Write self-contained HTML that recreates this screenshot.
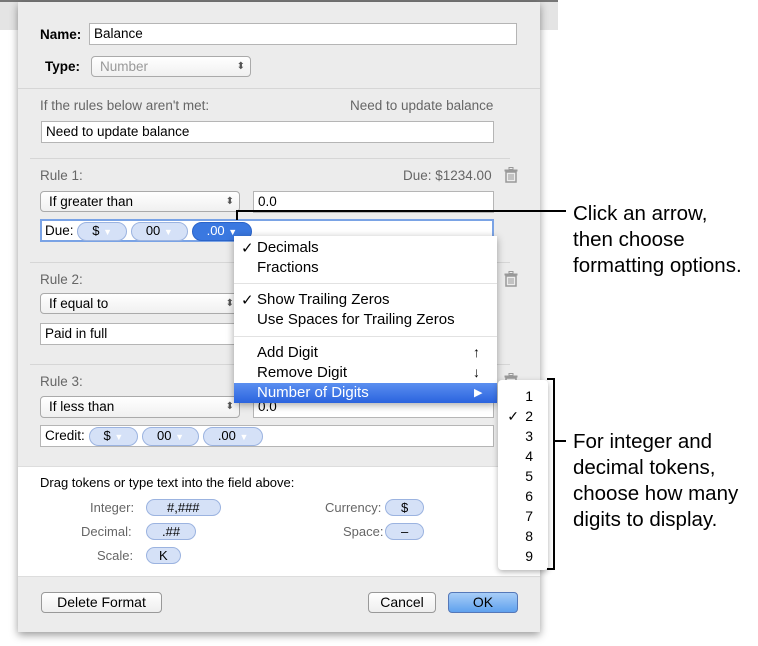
<!DOCTYPE html>
<html><head><style>
body{margin:0;width:758px;height:646px;background:#fff;position:relative;overflow:hidden;font-family:"Liberation Sans",sans-serif;font-size:13.5px;color:#000}
.a{position:absolute}
.f{position:absolute;background:#fff;border:1px solid #b5b5b5;box-sizing:border-box;padding:2px 4px;font-size:13.5px;line-height:16px}
.p{position:absolute;background:linear-gradient(#fff,#f0f0f0);border:1px solid #aaa;border-radius:4px;box-sizing:border-box;padding:2px 8px;font-size:13.5px;line-height:16px}
.p:after{content:"⬍";position:absolute;right:5px;top:2px;font-size:10px;color:#555}
.g{color:#666}
.t{display:inline-block;background:#d5e1f7;border:1px solid #9bb3e0;border-radius:10px;padding:0 14px;font-size:13px;line-height:15px;text-align:center}
.t i{font-style:normal;color:#fff;font-size:9px}
.sep{position:absolute;height:1px;background:#d6d6d6}
.m{position:absolute;left:23px;font-size:15px}
.b{position:absolute;background:linear-gradient(#fff,#eee);border:1px solid #999;border-radius:4px;box-sizing:border-box;text-align:center;font-size:14px;line-height:19px}
.c{position:absolute;left:573px;font-size:20.5px;line-height:26px}
.tr{position:absolute;width:14px;height:16px}
</style></head><body>
<svg width="0" height="0" style="position:absolute"><defs><symbol id="tr" viewBox="0 0 14 16"><rect x="5" y="0.5" width="4" height="2" fill="none" stroke="#999"/><rect x="0.5" y="2.5" width="13" height="2" fill="#999"/><path d="M2 5h10v10H2z" fill="none" stroke="#999" stroke-width="1.5"/><path d="M5 7v6M7 7v6M9 7v6" stroke="#999"/></symbol></defs></svg>
<div class="a" style="left:0;top:0;width:558px;height:28px;background:#e4e4e4;border-top:2px solid #777"></div>
<div class="a" style="left:18px;top:2px;width:522px;height:630px;background:#ececec;box-shadow:0 3px 8px rgba(0,0,0,.4)"></div>
<div class="a" style="left:40px;top:27px;font-weight:bold">Name:</div>
<div class="f" style="left:89px;top:23px;width:428px;height:22px">Balance</div>
<div class="a" style="left:45px;top:59px;font-weight:bold">Type:</div>
<div class="p" style="left:91px;top:56px;width:160px;height:21px;color:#999">Number</div>
<div class="sep" style="left:18px;top:88px;width:522px"></div>
<div class="a g" style="left:40px;top:98px">If the rules below aren't met:</div>
<div class="a g" style="left:350px;top:98px">Need to update balance</div>
<div class="f" style="left:41px;top:121px;width:453px;height:22px">Need to update balance</div>
<div class="sep" style="left:30px;top:158px;width:480px"></div>
<div class="a g" style="left:40px;top:168px">Rule 1:</div>
<div class="a g" style="left:403px;top:168px">Due: $1234.00</div>
<svg class="tr" style="left:504px;top:167px"><use href="#tr"/></svg>
<div class="p" style="left:40px;top:191px;width:200px;height:21px">If greater than</div>
<div class="f" style="left:253px;top:191px;width:241px;height:22px">0.0</div>
<div class="f" style="left:40px;top:219px;width:454px;height:23px;border:2px solid #7aa3e5;padding:1px 3px">Due: <span class="t">$ <i>▼</i></span> <span class="t">00 <i>▼</i></span> <span class="t" style="background:#3a78e0;color:#fff;border-color:#2a63c8">.00 <i>▼</i></span></div>
<div class="sep" style="left:30px;top:262px;width:480px"></div>
<div class="a g" style="left:40px;top:272px">Rule 2:</div>
<svg class="tr" style="left:504px;top:271px"><use href="#tr"/></svg>
<div class="p" style="left:40px;top:293px;width:200px;height:21px">If equal to</div>
<div class="f" style="left:40px;top:323px;width:454px;height:22px">Paid in full</div>
<div class="sep" style="left:30px;top:364px;width:480px"></div>
<div class="a g" style="left:40px;top:374px">Rule 3:</div>
<svg class="tr" style="left:504px;top:373px"><use href="#tr"/></svg>
<div class="p" style="left:40px;top:396px;width:200px;height:22px">If less than</div>
<div class="f" style="left:253px;top:396px;width:241px;height:22px">0.0</div>
<div class="f" style="left:40px;top:425px;width:454px;height:22px;padding:1px 4px">Credit: <span class="t">$ <i>▼</i></span> <span class="t">00 <i>▼</i></span> <span class="t">.00 <i>▼</i></span></div>
<div class="a" style="left:18px;top:466px;width:522px;height:109px;background:#fff;border-top:1px solid #ddd;border-bottom:1px solid #ddd"></div>
<div class="a" style="left:40px;top:475px;font-size:13px">Drag tokens or type text into the field above:</div>
<div class="a g" style="left:90px;top:500px;font-size:13px">Integer:</div><div class="a" style="left:146px;top:499px"><span class="t" style="padding:0 20px">#,###</span></div>
<div class="a g" style="left:81px;top:524px;font-size:13px">Decimal:</div><div class="a" style="left:146px;top:523px"><span class="t" style="padding:0 15px">.##</span></div>
<div class="a g" style="left:97px;top:548px;font-size:13px">Scale:</div><div class="a" style="left:146px;top:547px"><span class="t" style="padding:0 12px">K</span></div>
<div class="a g" style="left:325px;top:500px;font-size:13px">Currency:</div><div class="a" style="left:385px;top:499px"><span class="t" style="padding:0 15px">$</span></div>
<div class="a g" style="left:343px;top:524px;font-size:13px">Space:</div><div class="a" style="left:385px;top:523px"><span class="t" style="padding:0 15px">–</span></div>
<div class="b" style="left:41px;top:592px;width:121px;height:21px">Delete Format</div>
<div class="b" style="left:368px;top:592px;width:68px;height:21px">Cancel</div>
<div class="b" style="left:448px;top:592px;width:70px;height:21px;background:linear-gradient(#a8cdf7,#5fa1ee);border-color:#5578b8">OK</div>
<div class="a" style="left:234px;top:236px;width:263px;height:167px;background:#fff;border-radius:0 0 4px 4px;box-shadow:0 2px 8px rgba(0,0,0,.35)">
<div class="m" style="top:3px"><span style="position:absolute;left:-16px">✓</span>Decimals</div>
<div class="m" style="top:23px">Fractions</div>
<div class="sep" style="left:0;top:47px;width:263px;background:#e2e2e2"></div>
<div class="m" style="top:55px"><span style="position:absolute;left:-16px">✓</span>Show Trailing Zeros</div>
<div class="m" style="top:75px">Use Spaces for Trailing Zeros</div>
<div class="sep" style="left:0;top:100px;width:263px;background:#e2e2e2"></div>
<div class="m" style="top:108px">Add Digit</div><div class="a" style="left:239px;top:108px;font-size:14px">↑</div>
<div class="m" style="top:128px">Remove Digit</div><div class="a" style="left:239px;top:128px;font-size:14px">↓</div>
<div class="a" style="left:0;top:147px;width:263px;height:20px;background:linear-gradient(#5b8ff0,#2a63de);color:#fff"><span class="m" style="top:1px">Number of Digits</span><span class="a" style="left:240px;top:3px;font-size:11px">▶</span></div>
</div>
<div class="a" style="left:498px;top:380px;width:50px;height:190px;background:#fff;border-radius:4px;box-shadow:0 2px 6px rgba(0,0,0,.3);font-size:14px;line-height:20px;text-align:right">
<div style="padding:6px 15px 0 0">1<br><span style="position:relative"><span style="position:absolute;left:-18px">✓</span>2</span><br>3<br>4<br>5<br>6<br>7<br>8<br>9</div></div>
<div class="a" style="left:236px;top:210px;width:2px;height:10px;background:#000"></div>
<div class="a" style="left:236px;top:210px;width:330px;height:2px;background:#000"></div>
<div class="c" style="top:201px">Click an arrow,<br>then choose<br>formatting options.</div>
<div class="a" style="left:553px;top:378px;width:2px;height:192px;background:#000"></div>
<div class="a" style="left:547px;top:378px;width:8px;height:2px;background:#000"></div>
<div class="a" style="left:547px;top:568px;width:8px;height:2px;background:#000"></div>
<div class="a" style="left:553px;top:440px;width:13px;height:2px;background:#000"></div>
<div class="c" style="top:429px">For integer and<br>decimal tokens,<br>choose how many<br>digits to display.</div>
</body></html>
